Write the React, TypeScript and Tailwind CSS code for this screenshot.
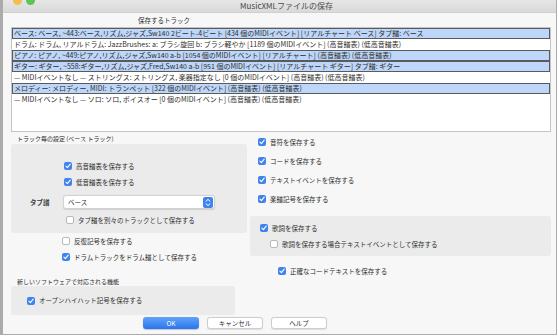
import React from 'react';
import clsx from 'clsx';

const tracks = [
  { sel: true, text: 'ベース: ベース, ~443:ベース,リズム,ジャズ,Sw140  2ビート-4ビート [434 個のMIDIイベント] [リアルチャート ベース] タブ譜: ベース' },
  { sel: false, text: 'ドラム: ドラム, リアルドラム: JazzBrushes: a: ブラシ旋回 b: ブラシ軽やか  [1189 個のMIDIイベント] (高音譜表) (低高音譜表)' },
  { sel: true, text: 'ピアノ: ピアノ, ~449:ピアノ,リズム,ジャズ,Sw140 a-b [1054 個のMIDIイベント] [リアルチャート] (高音譜表) (低高音譜表)' },
  { sel: true, text: 'ギター: ギター, ~558:ギター,リズム,ジャズ,Fred,Sw140 a-b [951 個のMIDIイベント] [リアルチャート ギター] タブ譜: ギター' },
  { sel: false, text: '— MIDIイベントなし — ストリングス: ストリングス, 楽器指定なし  [0 個のMIDIイベント] (高音譜表) (低高音譜表)' },
  { sel: true, text: 'メロディー: メロディー, MIDI: トランペット [322 個のMIDIイベント] (高音譜表) (低高音譜表)' },
  { sel: false, text: '— MIDIイベントなし — ソロ: ソロ, ボイスオー [0 個のMIDIイベント] (高音譜表) (低高音譜表)' },
];

const Check = ({ on }: { on?: boolean }) =>
  on ? (
    <span className="flex h-[8px] w-[8px] shrink-0 items-center justify-center rounded-[2px] bg-[#3f83ee]">
      <svg viewBox="0 0 8 8" className="h-[8px] w-[8px]">
        <path d="M1.9 4.1 L3.4 5.6 L6.2 2.2" fill="none" stroke="#fff" strokeWidth="1.1" strokeLinecap="round" strokeLinejoin="round" />
      </svg>
    </span>
  ) : (
    <span className="h-[8px] w-[8px] shrink-0 rounded-[2px] border border-[#b9b9b9] bg-white" />
  );

const Opt = ({ on, label, className }: { on?: boolean; label: string; className?: string }) => (
  <div className={clsx('flex h-[12px] items-center gap-[4px]', className)}>
    <Check on={on} />
    <span className="whitespace-nowrap">{label}</span>
  </div>
);

export default function App() {
  return (
    <div className="h-[336px] w-[558px] overflow-hidden bg-white font-['Noto_Sans_CJK_JP','Noto_Sans',sans-serif] text-[6.5px] leading-none text-[#2e2e2e]">
      <div className="h-[335px] w-[557px] border-b border-l-[3px] border-r border-[#ababab] bg-[#f7f7f7]">
        {/* title bar */}
        <div className="relative flex h-[13px] items-center justify-center border-b border-[#cfcfcf] bg-gradient-to-b from-[#e6e6e6] to-[#d9d9d9] pl-[14px] text-[8px] text-[#4a4a4a]">
          <div className="absolute left-[10px] top-[-4px] flex gap-[4px]">
            <span className="h-[9px] w-[9px] rounded-full bg-[#f6be50]" />
            <span className="h-[9px] w-[9px] rounded-full bg-[#5cc653]" />
          </div>
          MusicXMLファイルの保存
        </div>

        <div className="pl-[8px] pr-[5px]">
          <div className="ml-[127px] mt-[2px] h-[10px] leading-[10px]">保存するトラック</div>

          {/* track list */}
          <div className="mt-[2px] h-[105px] overflow-hidden border border-[#c4c4c4] bg-white">
            {tracks.map((t, i) => (
              <div
                key={i}
                className={clsx(
                  'h-[11px] whitespace-nowrap pl-[1px] text-[7px] leading-[9px]',
                  t.sel ? 'border border-[#5a5a5a] bg-[#bdd6f9]' : 'border border-transparent'
                )}
              >
                {t.text}
              </div>
            ))}
          </div>

          <div className="flex items-start gap-[3px]">
            {/* left column */}
            <div className="w-[236px]">
              <div className="mt-[3px] h-[8px] pl-[6px] text-[6px] leading-[8px]">トラック毎の設定 (ベース トラック)</div>
              <div className="mt-[1px] h-[89px] rounded-[3px] bg-[#ebebeb] pt-[16px]">
                <Opt on label="高音譜表を保存する" className="pl-[53px]" />
                <Opt on label="低音譜表を保存する" className="mt-[4px] pl-[53px]" />
                <div className="mt-[7px] flex h-[14px] items-center pl-[19px]">
                  <span className="w-[33px] font-bold text-[#3a3a3a]">タブ譜</span>
                  <div className="flex h-[14px] w-[152px] items-center justify-between rounded-[3px] border border-[#d2d2d2] bg-white pl-[4px] pr-[1px] shadow-[0_0.5px_1px_rgba(0,0,0,0.12)]">
                    <span>ベース</span>
                    <span className="flex h-[11px] w-[10px] items-center justify-center rounded-[2px] bg-[#3f83ee]">
                      <svg viewBox="0 0 10 11" className="h-[11px] w-[10px]">
                        <path d="M3 4.2 L5 2.4 L7 4.2 M3 6.8 L5 8.6 L7 6.8" fill="none" stroke="#fff" strokeWidth="1" strokeLinecap="round" strokeLinejoin="round" />
                      </svg>
                    </span>
                  </div>
                </div>
                <Opt label="タブ譜を別々のトラックとして保存する" className="mt-[5px] pl-[55px]" />
              </div>
              <Opt label="反復記号を保存する" className="mt-[2px] pl-[51px]" />
              <Opt on label="ドラムトラックをドラム譜として保存する" className="mt-[4px] pl-[51px]" />
              <div className="mt-[15px] h-[8px] pl-[6px] text-[6px] leading-[8px]">新しいソフトウェアで対応される機能</div>
              <div className="flex h-[29px] w-[224px] items-center rounded-[3px] bg-[#ebebeb] pl-[16px]">
                <Opt on label="オープンハイハット記号を保存する" />
              </div>
            </div>

            {/* right column */}
            <div className="flex-1">
              <Opt on label="音符を保存する" className="mt-[4px] pl-[8px]" />
              <Opt on label="コードを保存する" className="mt-[7px] pl-[8px]" />
              <Opt on label="テキストイベントを保存する" className="mt-[7px] pl-[8px]" />
              <Opt on label="楽譜記号を保存する" className="mt-[7px] pl-[8px]" />
              <div className="mt-[11px] h-[40px] rounded-[3px] bg-[#ebebeb] pt-[6px]">
                <Opt on label="歌詞を保存する" className="pl-[10px]" />
                <Opt label="歌詞を保存する場合テキストイベントとして保存する" className="mt-[4px] pl-[20px]" />
              </div>
              <Opt on label="正確なコードテキストを保存する" className="mt-[9px] pl-[28px]" />
            </div>
          </div>

          {/* buttons */}
          <div className="mt-[2px] flex gap-[8px] pl-[132px]">
            <button className="flex h-[12px] w-[56px] items-center justify-center rounded-[3px] bg-gradient-to-b from-[#62a3f8] to-[#2a74ee] text-white shadow-[0_0.5px_1px_rgba(0,0,0,0.2)]">OK</button>
            <button className="flex h-[12px] w-[56px] items-center justify-center rounded-[3px] border border-[#cdcdcd] bg-white shadow-[0_0.5px_1px_rgba(0,0,0,0.1)]">キャンセル</button>
            <button className="flex h-[12px] w-[56px] items-center justify-center rounded-[3px] border border-[#cdcdcd] bg-white shadow-[0_0.5px_1px_rgba(0,0,0,0.1)]">ヘルプ</button>
          </div>
        </div>
      </div>
    </div>
  );
}
